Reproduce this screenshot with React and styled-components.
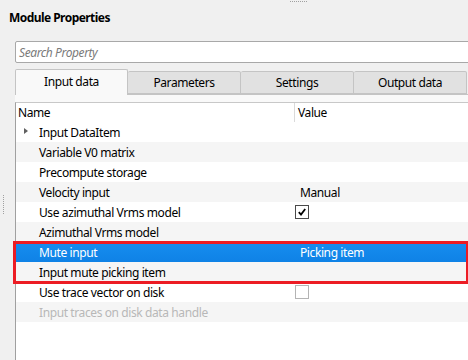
import React from "react";
import styled, { createGlobalStyle } from "styled-components";

const Global = createGlobalStyle`
  html, body { margin: 0; padding: 0; background: #f0f0f0; }
  body { font-family: "Noto Sans", "Open Sans", sans-serif; font-size: 12px; letter-spacing: -0.4px; color: #000; }
  * { box-sizing: border-box; }
`;

const Root = styled.div`
  position: relative;
  width: 468px;
  height: 360px;
  overflow: hidden;
  background: #f0f0f0;
  display: flex;
  flex-direction: column;
`;

const TopGrip = styled.div`
  position: absolute;
  left: 290px;
  top: 1px;
  width: 17px;
  height: 1px;
  border-top: 1px dotted #a0a0a0;
`;

const Title = styled.div`
  margin: 9px 0 0 9px;
  font-weight: 700;
  font-size: 12px;
  letter-spacing: -0.55px;
  line-height: 17px;
  height: 17px;
`;

const Body = styled.div`
  flex: 1;
  display: flex;
  margin-top: 15px;
  min-height: 0;
`;

const GripColumn = styled.div`
  width: 15px;
  flex: none;
  display: flex;
  justify-content: flex-start;
  padding-left: 3px;
`;

const SideGrip = styled.div`
  margin-top: 154px;
  width: 1px;
  height: 19px;
  border-left: 1px dotted #a0a0a0;
`;

const Content = styled.div`
  flex: 1;
  display: flex;
  flex-direction: column;
  min-width: 0;
`;

const Search = styled.div`
  height: 22px;
  width: 470px;
  background: #fff;
  border: 1px solid #a8a8a8;
  border-radius: 2px;
  padding-left: 3px;
  display: flex;
  align-items: center;
  font-style: italic;
  color: #7a7a7a;
`;

const TabBar = styled.div`
  margin-top: 7px;
  height: 25px;
  display: flex;
  align-items: flex-end;
  border-bottom: 1px solid #c4c4c4;
`;

const Tab = styled.div`
  width: 113px;
  flex: none;
  height: ${(p) => (p.$active ? "26px" : "23px")};
  margin-bottom: ${(p) => (p.$active ? "-1px" : "0")};
  background: ${(p) => (p.$active ? "#f9f9f9" : "#e1e1e1")};
  border: 1px solid #c4c4c4;
  border-bottom: ${(p) => (p.$active ? "none" : "1px solid #c4c4c4")};
  border-left: ${(p) => (p.$first ? "1px solid #c4c4c4" : "none")};
  border-radius: 2px 2px 0 0;
  display: flex;
  align-items: center;
  justify-content: center;
  padding-bottom: ${(p) => (p.$active ? "3px" : "0")};
`;

const Pane = styled.div`
  flex: 1;
  background: #f9f9f9;
  padding-top: 7px;
  display: flex;
  flex-direction: column;
  min-height: 0;
`;

const Table = styled.div`
  flex: 1;
  background: #fff;
  border-left: 1px solid #a0a0a0;
  border-top: 1px solid #c8c8c8;
`;

const Header = styled.div`
  height: 19px;
  display: grid;
  grid-template-columns: 278px 1fr;
  background: #fff;
`;

const HeadCell = styled.div`
  padding-left: ${(p) => (p.$value ? "3px" : "2px")};
  border-left: ${(p) => (p.$value ? "1px solid #dadada" : "none")};
  display: flex;
  align-items: center;
`;

const Row = styled.div`
  height: 20px;
  display: grid;
  grid-template-columns: 278px 1fr;
  align-items: center;
  background: ${(p) => (p.$selected ? "linear-gradient(#168df0, #0f82e6)" : p.$alt ? "#f5f5f5" : "#fff")};
  color: ${(p) => (p.$selected ? "#fff" : p.$disabled ? "#b8b8b8" : "#000")};
`;

const NameCell = styled.div`
  position: relative;
  padding-left: 23px;
  white-space: nowrap;
`;

const Arrow = styled.span`
  position: absolute;
  left: 8px;
  top: 50%;
  margin-top: -4px;
  width: 0;
  height: 0;
  border-top: 3.5px solid transparent;
  border-bottom: 3.5px solid transparent;
  border-left: 4px solid #606060;
`;

const ValueCell = styled.div`
  padding-left: ${(p) => (p.$box ? "1px" : "6px")};
  display: flex;
  align-items: center;
`;

const Check = styled.span`
  width: 14px;
  height: 14px;
  border: 1px solid ${(p) => (p.$on ? "#4a4a4a" : "#b4b4b4")};
  background: #fff;
  display: flex;
  align-items: center;
  justify-content: center;
`;

const Highlight = styled.div`
  position: absolute;
  left: 13px;
  top: 241px;
  width: 456px;
  height: 43px;
  border: 3px solid #ec1c24;
  pointer-events: none;
`;

const rows = [
  { name: "Input DataItem", arrow: true },
  { name: "Variable V0 matrix" },
  { name: "Precompute storage" },
  { name: "Velocity input", value: "Manual" },
  { name: "Use azimuthal Vrms model", check: true },
  { name: "Azimuthal Vrms model" },
  { name: "Mute input", value: "Picking item", selected: true },
  { name: "Input mute picking item" },
  { name: "Use trace vector on disk", check: false },
  { name: "Input traces on disk data handle", disabled: true },
];

const tabs = ["Input data", "Parameters", "Settings", "Output data"];

export default function App() {
  return (
    <Root>
      <Global />
      <TopGrip />
      <Title>Module Properties</Title>
      <Body>
        <GripColumn>
          <SideGrip />
        </GripColumn>
        <Content>
          <Search>Search Property</Search>
          <TabBar>
            {tabs.map((t, i) => (
              <Tab key={t} $active={i === 0} $first={i === 0}>
                {t}
              </Tab>
            ))}
          </TabBar>
          <Pane>
            <Table>
              <Header>
                <HeadCell>Name</HeadCell>
                <HeadCell $value>Value</HeadCell>
              </Header>
              {rows.map((r, i) => (
                <Row key={r.name} $alt={i % 2 === 1} $selected={r.selected} $disabled={r.disabled}>
                  <NameCell>
                    {r.arrow && <Arrow />}
                    {r.name}
                  </NameCell>
                  <ValueCell $box={r.check !== undefined}>
                    {r.value}
                    {r.check !== undefined && (
                      <Check $on={r.check}>
                        {r.check && (
                          <svg width="10" height="10" viewBox="0 0 10 10">
                            <path d="M1.8 5.2 L4 7.6 L8.2 2" fill="none" stroke="#000" strokeWidth="1.8" />
                          </svg>
                        )}
                      </Check>
                    )}
                  </ValueCell>
                </Row>
              ))}
            </Table>
          </Pane>
        </Content>
      </Body>
      <Highlight />
    </Root>
  );
}
